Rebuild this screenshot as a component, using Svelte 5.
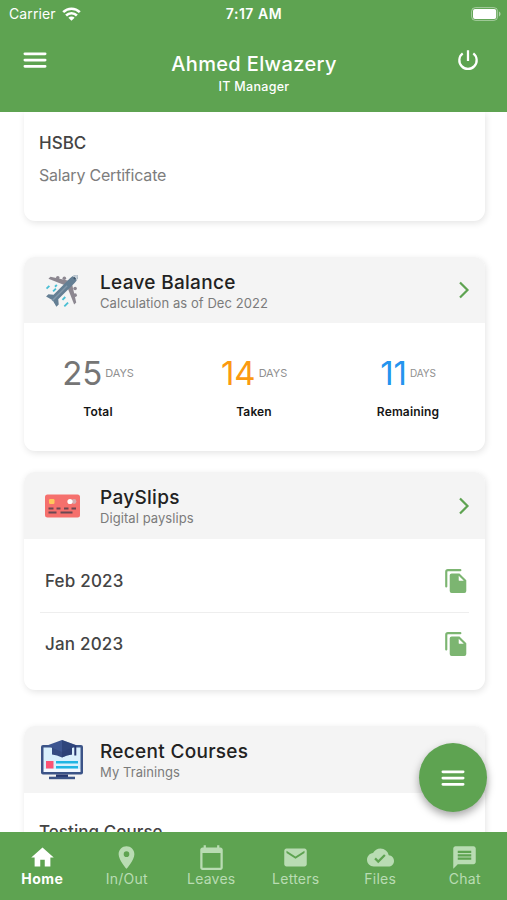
<script lang="ts">
	const balances = [
		{ label: 'Total', days: 25, tone: 'grey' },
		{ label: 'Taken', days: 14, tone: 'orange' },
		{ label: 'Remaining', days: 11, tone: 'blue' }
	];

	const payslips = ['Feb 2023', 'Jan 2023'];

	const tabs = [
		{ label: 'Home', icon: 'M10 20v-6h4v6h5v-8h3L12 3 2 12h3v8z' },
		{
			label: 'In/Out',
			icon: 'M12 2C8.13 2 5 5.13 5 9c0 5.25 7 13 7 13s7-7.75 7-13c0-3.87-3.13-7-7-7zm0 9.5a2.5 2.5 0 0 1 0-5 2.5 2.5 0 0 1 0 5z'
		},
		{
			label: 'Leaves',
			icon: 'M20 3h-1V1h-2v2H7V1H5v2H4c-1.1 0-2 .9-2 2v16c0 1.1.9 2 2 2h16c1.1 0 2-.9 2-2V5c0-1.1-.9-2-2-2zm0 18H4V8h16v13z'
		},
		{
			label: 'Letters',
			icon: 'M20 4H4c-1.1 0-1.99.9-1.99 2L2 18c0 1.1.9 2 2 2h16c1.1 0 2-.9 2-2V6c0-1.1-.9-2-2-2zm0 4l-8 5-8-5V6l8 5 8-5v2z'
		},
		{
			label: 'Files',
			icon: 'M19.35 10.04C18.67 6.59 15.64 4 12 4 9.11 4 6.6 5.64 5.35 8.04 2.34 8.36 0 10.91 0 14c0 3.31 2.69 6 6 6h13c2.76 0 5-2.24 5-5 0-2.64-2.05-4.78-4.65-4.96zM10 17l-3.5-3.5 1.41-1.41L10 14.17 15.18 9l1.41 1.41L10 17z'
		},
		{
			label: 'Chat',
			icon: 'M20 2H4c-1.1 0-1.99.9-1.99 2L2 22l4-4h14c1.1 0 2-.9 2-2V4c0-1.1-.9-2-2-2zM6 14v-2h12v2H6zm0-3V9h12v2H6zm0-3V6h12v2H6z'
		}
	];

	let activeTab = $state('Home');
</script>

{#snippet chevron()}
	<svg class="chevron" width="12" height="20" viewBox="0 0 12 20">
		<path d="M2 2.5 9.5 10 2 17.5" fill="none" stroke="currentColor" stroke-width="2.2" />
	</svg>
{/snippet}

{#snippet menuIcon()}
	<svg width="30" height="30" viewBox="0 0 24 24" fill="none" stroke="currentColor" stroke-width="2.2">
		<path d="M3.9 7h16.2M3.9 12h16.2M3.9 17h16.2" stroke-linecap="round" />
	</svg>
{/snippet}

<div class="app">
	<header>
		<div class="status-bar">
			<div class="carrier">
				<span>Carrier</span>
				<svg width="19" height="14" viewBox="0 0 19 14">
					<g fill="none" stroke="#fff" stroke-width="2.6">
						<path d="M1.2 5.2a11.8 11.8 0 0 1 16.6 0" />
						<path d="M4.1 8.5a7.7 7.7 0 0 1 10.8 0" />
					</g>
					<path d="M9.5 13.8 6.4 10.8a4.4 4.4 0 0 1 6.2 0z" fill="#fff" />
				</svg>
			</div>
			<span class="clock">7:17 AM</span>
			<svg class="battery" width="30" height="14" viewBox="0 0 30 14">
				<rect x="0.6" y="0.6" width="26" height="12.8" rx="3.8" fill="none" stroke="#fff" stroke-opacity=".45" />
				<rect x="2" y="2" width="23.2" height="10" rx="2" fill="#fff" />
				<path d="M28 4.6c2 .8 2 4 0 4.8z" fill="#fff" fill-opacity=".5" />
			</svg>
		</div>
		<div class="title-bar">
			<button aria-label="Menu">{@render menuIcon()}</button>
			<div class="user">
				<h1>Ahmed Elwazery</h1>
				<p>IT Manager</p>
			</div>
			<button class="power" aria-label="Log out">
				<svg width="26" height="26" viewBox="0 0 24 24" fill="none" stroke="currentColor" stroke-width="2.1">
					<path d="M12 3v10M7.1 5.9a8 8 0 1 0 9.8 0" />
				</svg>
			</button>
		</div>
	</header>

	<main>
		<section class="card letter">
			<h3>HSBC</h3>
			<p>Salary Certificate</p>
		</section>

		<section class="card leave">
			<div class="card-header">
				<svg class="card-icon" width="44" height="44" viewBox="-2 -2 47 47">
					<g fill="#8c8790">
						<path d="M26 17 7 9.5 9.2 7.3 30 12z" />
						<path d="M27 18 34.5 37 36.7 34.8 32 14z" />
						<circle cx="17" cy="8.5" r="1.9" />
						<circle cx="24" cy="9" r="1.9" />
						<circle cx="35.5" cy="20" r="1.9" />
						<circle cx="35.5" cy="27" r="1.9" />
					</g>
					<path d="M12.5 26.5 30 9q5-4.5 8.3-3.3Q39.5 9 35 14L17.5 31.5l.5 5.5-2.5 2.5-4-7-7-4L7 26z" fill="#647f94" />
					<path d="M33 6.8q3.5-2 5.3-1.1.9 1.8-1.1 5.3z" fill="#c7d0d8" />
					<path d="m34 8 2 2" stroke="#3f566b" stroke-width="1.8" />
					<path d="M11 33 27 17" stroke="#8298aa" stroke-width="1.5" />
					<path d="m5 20 3-3M12 23l3-3M14 18l2-2M22 32l3-3M24 39l4-4" stroke="#49bfd4" stroke-width="2" />
				</svg>
				<div class="heading">
					<h2>Leave Balance</h2>
					<p>Calculation as of Dec 2022</p>
				</div>
				{@render chevron()}
			</div>
			<div class="balances">
				{#each balances as balance}
					<div class="balance {balance.tone}">
						<div class="amount">
							<span class="days">{balance.days}</span>
							<span class="unit">DAYS</span>
						</div>
						<strong>{balance.label}</strong>
					</div>
				{/each}
			</div>
		</section>

		<section class="card payslips">
			<div class="card-header">
				<svg class="card-icon" width="44" height="44" viewBox="0 0 44 44">
					<rect x="5" y="10.5" width="35" height="23" rx="2.5" fill="#f5706d" />
					<rect x="9" y="15" width="5.5" height="5" rx="1.2" fill="#ffc65c" />
					<circle cx="34" cy="17.5" r="2.4" fill="#d3aeb2" />
					<circle cx="30" cy="17.5" r="2.6" fill="#fff" />
					<path d="M8.5 24.5h5m3 0h4m3.5 0h4.500m3 0h4.500M8.500 28.500h8m4 0h12" stroke="#6b4752" stroke-width="2" />
				</svg>
				<div class="heading">
					<h2>PaySlips</h2>
					<p>Digital payslips</p>
				</div>
				{@render chevron()}
			</div>
			<ul>
				{#each payslips as month}
					<li>
						<span>{month}</span>
						<svg width="26" height="26" viewBox="0 0 24 24" fill="none">
							<path d="M3 17V3.500Q3 2 4.500 2H16" stroke="currentColor" stroke-width="2" stroke-linecap="round" />
							<path d="M8 5h7.200L21.500 11.200V21.200Q21.500 23 19.700 23H8Q6.200 23 6.200 21.200V6.800Q6.200 5 8 5zM14.500 7.200V11Q14.500 11.800 15.300 11.800H19.200z" fill="currentColor" fill-rule="evenodd" />
						</svg>
					</li>
				{/each}
			</ul>
		</section>

		<section class="card courses">
			<div class="card-header">
				<svg class="card-icon" width="44" height="44" viewBox="0 0 44 44">
					<rect x="1" y="7" width="42" height="29.5" rx="2" fill="#3c5488" />
					<path d="M3.500 9.500h37V31h-37z" fill="#d9f0fd" />
					<path d="M3.500 31h37v3h-37z" fill="#f3f8ff" />
					<path d="M16 36.500h12v4H16z" fill="#26376f" />
					<path d="M9 38.700h26v2.500H9z" fill="#3c5488" />
					<path d="M12 9h20v7.500q-5 .5-10 3-5-2.500-10-3z" fill="#364c82" />
					<path d="M7 7.500 22 2l15 5.500L22 14z" fill="#3d5590" />
					<path d="M22 2v17.500q5-2.500 10-3V9.700L37 7.500z" fill="#263a70" fill-opacity=".6" />
					<path d="M35.300 8v9.500" stroke="#26376f" stroke-width="2" />
					<rect x="6" y="23" width="7.500" height="7.500" fill="#fb5274" />
					<path d="M16 24.300h22M16 29.300h22" stroke="#20b5e3" stroke-width="2.500" />
				</svg>
				<div class="heading">
					<h2>Recent Courses</h2>
					<p>My Trainings</p>
				</div>
			</div>
			<h3>Testing Course</h3>
		</section>
	</main>

	<button class="fab" aria-label="Quick actions">{@render menuIcon()}</button>

	<nav>
		{#each tabs as tab}
			<button class:active={activeTab === tab.label} onclick={() => (activeTab = tab.label)}>
				<svg width="27" height="27" viewBox="0 0 24 24" fill="currentColor">
					<path d={tab.icon} fill-rule="evenodd" />
				</svg>
				<span>{tab.label}</span>
			</button>
		{/each}
	</nav>
</div>

<style>
	:global(body) {
		background: #fff;
	}

	.app {
		--green: #5ea351;
		position: relative;
		display: flex;
		flex-direction: column;
		height: 900px;
		overflow: hidden;
		font-family: Inter, 'Liberation Sans', sans-serif;
		color: #333;
	}

	h1,
	h2,
	h3,
	p,
	ul {
		margin: 0;
		padding: 0;
		font-weight: 400;
	}

	svg {
		display: block;
		flex-shrink: 0;
	}

	button {
		display: flex;
		align-items: center;
		justify-content: center;
		padding: 0;
		border: none;
		background: none;
		color: inherit;
		font-family: inherit;
		cursor: pointer;
	}

	header {
		height: 112px;
		flex-shrink: 0;
		box-sizing: border-box;
		background: var(--green);
		color: #fff;
	}

	.status-bar {
		display: grid;
		grid-template-columns: 1fr auto 1fr;
		align-items: center;
		height: 27px;
		padding: 0 6px 0 7px;
		font-size: 14px;
	}

	.carrier {
		display: flex;
		align-items: center;
		gap: 6px;
		padding-left: 2px;
		letter-spacing: 0.1px;
	}

	.clock {
		font-size: 14px;
		font-weight: 600;
		letter-spacing: 0.55px;
	}

	.battery {
		justify-self: end;
	}

	.title-bar {
		display: flex;
		justify-content: space-between;
		padding: 18px 26px 0 20px;
	}

	.title-bar button {
		height: 30px;
	}

	.title-bar .power {
		height: 29px;
	}

	.user {
		padding: 7px 0 0 3px;
		text-align: center;
	}

	h1 {
		font-size: 20px;
		font-weight: 500;
		line-height: 25px;
		letter-spacing: 0.35px;
	}

	.user p {
		font-size: 12.5px;
		font-weight: 500;
		line-height: 19px;
		letter-spacing: 0.3px;
	}

	main {
		flex: 1;
		min-height: 0;
		overflow: hidden;
		padding: 0 22px 0 24px;
	}

	.card {
		box-sizing: border-box;
		border-radius: 11px;
		background: #fff;
		box-shadow: 1px 2px 7px rgba(0, 0, 0, 0.11);
		overflow: hidden;
	}

	.letter {
		height: 109px;
		padding: 19px 15px;
		border-radius: 0 0 11px 11px;
	}

	h3 {
		font-size: 17px;
		font-weight: 500;
		line-height: 24px;
		color: #444;
	}

	.letter p {
		margin-top: 8px;
		font-size: 16px;
		line-height: 24px;
		color: #7d7d7d;
		letter-spacing: -0.2px;
	}

	.leave {
		height: 194px;
		margin-top: 36px;
	}

	.payslips {
		height: 218px;
		margin-top: 21px;
	}

	.courses {
		height: 217px;
		margin-top: 36px;
	}

	.courses h3 {
		padding: 27px 15px;
		letter-spacing: 0.05px;
	}

	.card-header {
		display: flex;
		align-items: center;
		height: 67px;
		padding: 0 15px 0 16px;
		background: #f4f4f4;
	}

	.leave .card-header {
		height: 66px;
	}

	.heading {
		flex: 1;
		margin-left: 16px;
		padding-top: 3px;
	}

	h2 {
		font-size: 19px;
		font-weight: 500;
		line-height: 22px;
		letter-spacing: 0.3px;
		color: #222;
	}

	.heading p {
		font-size: 13px;
		line-height: 18px;
		letter-spacing: 0.07px;
		color: #7b7b7b;
	}

	.chevron {
		color: var(--green);
	}

	.balances {
		display: grid;
		grid-template-columns: repeat(3, 1fr);
		padding: 28px 0 0;
		margin: 0 -3px 0 -4px;
	}

	.balance {
		display: flex;
		flex-direction: column;
		align-items: center;
	}

	.amount {
		display: flex;
		align-items: center;
		gap: 3px;
		height: 43px;
	}

	.days {
		font-size: 33px;
		font-weight: 400;
	}

	.unit {
		font-size: 11px;
		letter-spacing: -0.1px;
		color: #909090;
	}

	.grey .days {
		color: #757575;
	}

	.orange .days {
		color: #fb9a10;
	}

	.blue .days {
		color: #2494ee;
	}

	.blue {
		margin-right: 4px;
	}

	.blue .unit {
		font-size: 10px;
	}

	strong {
		margin-top: 9px;
		font-size: 12px;
		font-weight: 600;
		line-height: 18px;
		letter-spacing: 0.15px;
		color: #151515;
	}

	ul {
		list-style: none;
		padding: 11px 16px 0;
	}

	li {
		display: flex;
		align-items: center;
		justify-content: space-between;
		height: 62px;
		padding: 0 0 0 5px;
		font-size: 17px;
		font-weight: 500;
		letter-spacing: 0.2px;
		color: #444;
	}

	li + li {
		border-top: 1px solid #eee;
	}

	li svg {
		color: #7cb571;
	}

	.fab {
		position: absolute;
		right: 20px;
		bottom: 88px;
		width: 68px;
		height: 69px;
		border-radius: 50%;
		background: var(--green);
		color: #fff;
		box-shadow: 0 4px 9px rgba(0, 0, 0, 0.35);
	}

	nav {
		position: relative;
		display: grid;
		grid-template-columns: repeat(6, 1fr);
		height: 68px;
		flex-shrink: 0;
		background: var(--green);
	}

	nav button {
		flex-direction: column;
		justify-content: flex-start;
		padding-top: 12px;
		color: #b9dcb3;
		font-size: 14px;
		letter-spacing: 0.25px;
	}

	nav span {
		margin-top: -1px;
		line-height: 17px;
	}

	nav .active {
		color: #fff;
		font-weight: 700;
		letter-spacing: 0.4px;
	}
</style>
